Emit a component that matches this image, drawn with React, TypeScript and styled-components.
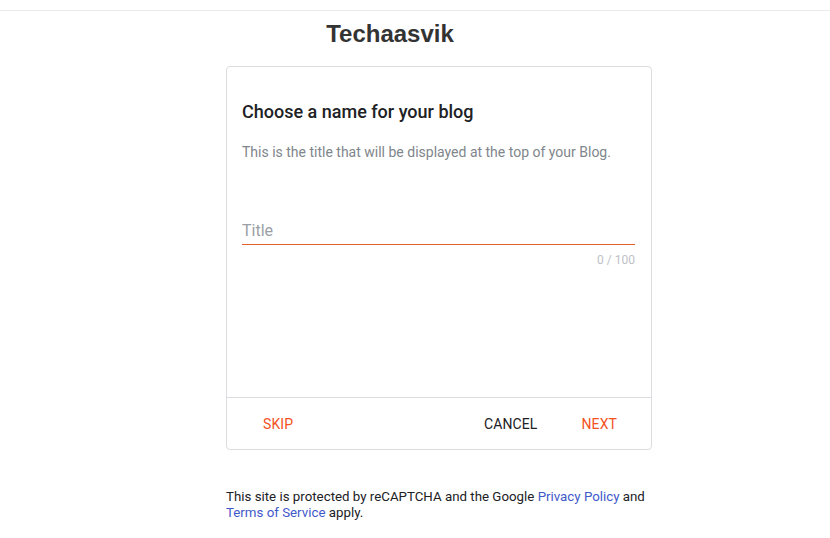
import React, { useState } from "react";
import styled, { createGlobalStyle } from "styled-components";

const GlobalStyle = createGlobalStyle`
  body {
    margin: 0;
    background: #fff;
    font-family: Roboto, "Liberation Sans", Arial, sans-serif;
  }
`;

const TopBar = styled.div`
  height: 10px;
  border-bottom: 1px solid #ececec;
`;

const BrandTitle = styled.h1`
  margin: 0;
  padding: 9px 50px 0 0;
  height: 55px;
  box-sizing: border-box;
  text-align: center;
  font-family: "Liberation Sans", Arial, sans-serif;
  font-size: 24px;
  line-height: 28px;
  font-weight: 700;
  color: #333;
`;

const Main = styled.main`
  width: 426px;
  margin: 0 0 0 226px;
`;

const Card = styled.section`
  border: 1px solid #dadce0;
  border-radius: 4px;
  height: 384px;
  box-sizing: border-box;
  display: flex;
  flex-direction: column;
`;

const CardBody = styled.div`
  flex: 1;
  padding: 33px 16px 0 15px;
`;

const Heading = styled.h2`
  margin: 0;
  font-size: 18px;
  line-height: 24px;
  font-weight: 500;
  color: #202124;
`;

const Subtitle = styled.p`
  margin: 18px 0 0;
  font-size: 14px;
  line-height: 20px;
  color: #80868b;
`;

const Field = styled.div`
  margin-top: 56px;
`;

const InputLine = styled.div`
  border-bottom: 1px solid #e4602a;
  padding-bottom: 1px;
`;

const TitleInput = styled.input`
  display: block;
  width: 100%;
  box-sizing: border-box;
  border: none;
  outline: none;
  padding: 0;
  background: transparent;
  font-family: inherit;
  font-size: 16px;
  line-height: 24px;
  height: 25px;
  color: #202124;
  &::placeholder {
    color: #9aa0a6;
  }
`;

const Counter = styled.div`
  margin-top: 7px;
  text-align: right;
  font-size: 12px;
  line-height: 16px;
  color: #bdc1c6;
`;

const CardFooter = styled.div`
  height: 51px;
  border-top: 1px solid #dadce0;
  display: flex;
  align-items: center;
  padding: 0 12px 0 14px;
`;

const Spacer = styled.div`
  flex: 1;
`;

const TextButton = styled.button<{ $accent?: boolean }>`
  background: none;
  border: none;
  height: 36px;
  padding: 0 22px;
  font-family: inherit;
  font-size: 14px;
  font-weight: 400;
  letter-spacing: 0.1px;
  text-transform: uppercase;
  color: ${(p) => (p.$accent ? "#f4511e" : "#202124")};
  cursor: pointer;
`;

const Notice = styled.p`
  margin: 39px 0 0;
  font-size: 13.3px;
  line-height: 16px;
  color: #202124;
`;

const NoticeLink = styled.a`
  color: #4059c9;
  text-decoration: none;
`;

export default function App() {
  const [title, setTitle] = useState("");

  return (
    <>
      <GlobalStyle />
      <TopBar />
      <BrandTitle>Techaasvik</BrandTitle>
      <Main>
        <Card>
          <CardBody>
            <Heading>Choose a name for your blog</Heading>
            <Subtitle>
              This is the title that will be displayed at the top of your Blog.
            </Subtitle>
            <Field>
              <InputLine>
                <TitleInput
                  placeholder="Title"
                  value={title}
                  maxLength={100}
                  onChange={(e) => setTitle(e.target.value)}
                />
              </InputLine>
              <Counter>{title.length} / 100</Counter>
            </Field>
          </CardBody>
          <CardFooter>
            <TextButton $accent>Skip</TextButton>
            <Spacer />
            <TextButton>Cancel</TextButton>
            <TextButton $accent>Next</TextButton>
          </CardFooter>
        </Card>
        <Notice>
          This site is protected by reCAPTCHA and the Google{" "}
          <NoticeLink href="#">Privacy Policy</NoticeLink> and{" "}
          <NoticeLink href="#">Terms of Service</NoticeLink> apply.
        </Notice>
      </Main>
    </>
  );
}
